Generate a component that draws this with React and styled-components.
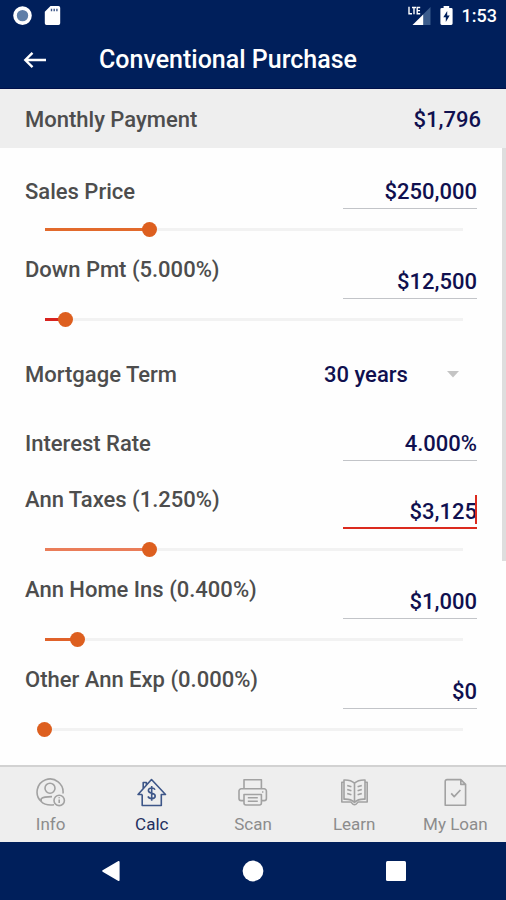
import React, { useState } from "react";
import styled, { createGlobalStyle, css } from "styled-components";

const navy = "#001f5b";
const ink = "#10104f";
const grey = "#4d4d4d";
const orange = "#dd5f1f";

const GlobalStyle = createGlobalStyle`
  *, *::before, *::after { box-sizing: border-box; }
  body { margin: 0; background: #fff; font-family: Roboto, sans-serif; }
  button, input, select { font: inherit; color: inherit; }
`;

const Screen = styled.div`
  display: flex;
  flex-direction: column;
  min-height: 100vh;
  background: #fefefe;
`;

const StatusBar = styled.div`
  display: flex;
  align-items: center;
  justify-content: space-between;
  height: 32px;
  padding: 0 9px 0 12px;
  background: ${navy};
  color: #fff;
`;

const StatusGroup = styled.div`
  display: flex;
  align-items: center;
  gap: ${(p) => p.$gap}px;
  font-size: 18px;
  font-weight: 500;
  line-height: 32px;
`;

const AppBar = styled.header`
  display: flex;
  align-items: center;
  gap: 46px;
  height: 57px;
  padding: 0 17px;
  background: ${navy};
  border-bottom: 1px solid #00104a;
  color: #fff;
`;

const IconButton = styled.button`
  display: flex;
  align-items: center;
  justify-content: center;
  width: 36px;
  height: 36px;
  padding: 0;
  border: 0;
  background: none;
  color: #fff;
  cursor: pointer;
`;

const Title = styled.h1`
  margin: 0;
  font-size: 25px;
  font-weight: 500;
  line-height: 32px;
`;

const Summary = styled.section`
  display: flex;
  align-items: center;
  justify-content: space-between;
  height: 59px;
  padding: 2px 25px 0;
  background: #eee;
  color: ${grey};
  font-size: 22px;
  font-weight: 500;
  line-height: 28px;
`;

const Amount = styled.output`
  color: ${ink};
`;

const Form = styled.form`
  position: relative;
  flex: 1;
  padding: 7px 29px 20px 25px;
`;

const ScrollThumb = styled.div`
  position: absolute;
  top: 0;
  right: 0;
  width: 4px;
  height: 67%;
  background: #dedede;
`;

const Field = styled.div`
  padding-top: ${(p) => (p.$compact ? 12 : 18)}px;
  padding-bottom: ${(p) => (p.$compact ? 14 : 2)}px;
`;

const FieldRow = styled.div`
  display: flex;
  align-items: ${(p) => (p.$raised ? "flex-start" : "center")};
  justify-content: space-between;
  gap: 16px;
`;

const Label = styled.label`
  margin-top: ${(p) => (p.$raised ? -9 : 0)}px;
  padding-top: 2px;
  color: ${grey};
  font-size: 22px;
  font-weight: 500;
  line-height: 28px;
  white-space: nowrap;
`;

const InputBox = styled.div`
  position: relative;
  flex: 0 0 134px;
`;

const TextInput = styled.input`
  display: block;
  width: 100%;
  height: 36px;
  padding: 2px 0 0;
  border: 0;
  border-bottom: 1px solid #c2c4c8;
  border-radius: 0;
  outline: 0;
  background: none;
  color: ${ink};
  font-size: 22px;
  font-weight: 500;
  text-align: right;
  ${(p) =>
    p.$active &&
    css`
      border-bottom: 2px solid #db2a1e;
      caret-color: transparent;
    `}
`;

const Caret = styled.span`
  position: absolute;
  right: 0;
  bottom: 5px;
  width: 2px;
  height: 29px;
  background: #db2a1e;
`;

const Slider = styled.input`
  display: block;
  appearance: none;
  width: calc(100% - 19px);
  height: 27px;
  margin: 7px 0 0 12px;
  cursor: pointer;
  background: linear-gradient(
      to right,
      ${(p) => p.$fill} var(--level),
      #f2f2f2 var(--level)
    )
    center / calc(100% - 15px) 3px no-repeat;

  &::-webkit-slider-thumb {
    appearance: none;
    width: 15px;
    height: 15px;
    border: 0;
    border-radius: 50%;
    background: ${orange};
  }
`;

const TermRow = styled.div`
  display: flex;
  align-items: center;
  justify-content: space-between;
  height: 78px;
`;

const SelectBox = styled.div`
  display: grid;
  grid-template-columns: 1fr 12px;
  align-items: center;
  width: 153px;
  padding-right: 18px;

  svg {
    grid-area: 1 / 2;
    pointer-events: none;
  }
`;

const Select = styled.select`
  grid-area: 1 / 1 / 2 / 3;
  appearance: none;
  height: 36px;
  padding: 0;
  border: 0;
  background: none;
  color: ${ink};
  font-size: 22px;
  font-weight: 500;
`;

const TabBar = styled.nav`
  display: grid;
  grid-template-columns: repeat(5, 1fr);
  height: 77px;
  border-top: 2px solid #d2d2d2;
  background: #eee;
`;

const Tab = styled.a`
  display: flex;
  flex-direction: column;
  align-items: center;
  gap: 6px;
  padding-top: 10px;
  color: ${(p) => (p.$active ? "#24305f" : "#8c8c8c")};
  font-size: 17px;
  line-height: 20px;
  text-decoration: none;

  svg {
    color: ${(p) => (p.$active ? "#3d5688" : "#a2a2a2")};
  }
`;

const SystemNav = styled.div`
  display: grid;
  grid-template-columns: repeat(3, 1fr);
  justify-items: center;
  align-items: center;
  height: 58px;
  padding: 0 39px 0 40px;
  background: ${navy};
`;

function TabIcon({ name }) {
  const shapes = {
    info: (
      <>
        <path d="M6.2 24.5A13 13 0 1 1 28 16.5M6.2 24.5V21.8C8 20 12 19.6 17 19.6M6.2 24.5C9 27.6 13.5 28.4 19 27.8" />
        <circle cx="15" cy="11.2" r="5" />
        <circle cx="24.2" cy="23.4" r="5.2" />
        <path d="M24.2 22.5v3.6M24.2 20.2v1" />
      </>
    ),
    calc: (
      <>
        <path d="M6.2 17.5H2L15.5 2.5 29.5 17.5H25.3V28.5H6.2V17.5M7.2 11.5V5.5H10.4V8" />
        <path d="M19 12.8C18.4 11.4 17.2 11 15.7 11 13.8 11 12.4 12 12.4 13.6 12.4 17.4 19.2 15.2 19.2 19 19.2 20.8 17.6 21.6 15.8 21.6 14 21.6 12.6 21 12 19.4M15.7 9v14.8" strokeWidth="1.6" />
      </>
    ),
    scan: (
      <>
        <path d="M7 11.8V2.8H24.4V11.8M7 23.6H4.2A2.2 2.2 0 0 1 2 21.4V14A2.2 2.2 0 0 1 4.2 11.8H27.2A2.2 2.2 0 0 1 29.4 14V21.4A2.2 2.2 0 0 1 27.2 23.6H24.4" />
        <path d="M7 17.5H24.4V26A2 2 0 0 1 22.4 28H9A2 2 0 0 1 7 26ZM10.8 20.7H20.8M10.8 24.2H20.8M25 15H26.4" />
      </>
    ),
    learn: (
      <>
        <path d="M15.5 6.2C12.5 3.4 8.8 2.8 5 3V22.2C9 22 12.8 22.8 15.5 25.4 18.2 22.8 22 22 26 22.2V3C22.2 2.8 18.5 3.4 15.5 6.2ZM15.5 6.2V25.4" />
        <path d="M5 5.2H2.8V25H11.5C13 25 13 27.8 15.5 27.8S18 25 19.5 25H28.2V5.2H26" />
        <path d="M8.2 8.4l4.2 1.4M8.2 12.4l4.2 1.4M8.2 16.4l4.2 1.4M22.8 8.4l-4.2 1.4M22.8 12.4l-4.2 1.4M22.8 16.4l-4.2 1.4" />
      </>
    ),
    loan: (
      <>
        <path d="M5.2 4.4A1.8 1.8 0 0 1 7 2.6H20.8L25.6 7.4V28.2H5.2ZM20.8 2.6V7.4H25.6" />
        <path d="M11.2 16.4L14.2 19.6 20.4 13" strokeWidth="1.7" />
      </>
    ),
  };
  return (
    <svg width="31" height="31" viewBox="0 0 31 31" fill="none" stroke="currentColor" strokeWidth="1.6" strokeLinejoin="round" aria-hidden="true">
      {shapes[name]}
    </svg>
  );
}

function AmountField({ id, label, initial, level, fill, raised, active }) {
  const [value, setValue] = useState(initial);
  const [position, setPosition] = useState(level);
  const hasSlider = level !== undefined;
  return (
    <Field $compact={!hasSlider}>
      <FieldRow $raised={raised}>
        <Label htmlFor={id} $raised={raised}>{label}</Label>
        <InputBox>
          <TextInput id={id} $active={active} value={value} onChange={(e) => setValue(e.target.value)} />
          {active && <Caret />}
        </InputBox>
      </FieldRow>
      {hasSlider && (
        <Slider
          type="range"
          min="0"
          max="100"
          aria-label={label}
          value={position}
          $fill={fill}
          style={{ "--level": `${position}%` }}
          onChange={(e) => setPosition(Number(e.target.value))}
        />
      )}
    </Field>
  );
}

const tabs = [
  { name: "info", label: "Info" },
  { name: "calc", label: "Calc" },
  { name: "scan", label: "Scan" },
  { name: "learn", label: "Learn" },
  { name: "loan", label: "My Loan" },
];

export default function App() {
  return (
    <Screen>
      <GlobalStyle />
      <StatusBar>
        <StatusGroup $gap={12}>
          <svg width="20" height="20" viewBox="0 0 20 20" aria-hidden="true">
            <circle cx="10.5" cy="9.6" r="7.5" fill="#5f7fa8" stroke="#fff" strokeWidth="3.6" />
          </svg>
          <svg width="17" height="20" viewBox="0 0 17 20" aria-hidden="true">
            <path d="M6.5 0H14.5A1.7 1.7 0 0 1 16.2 1.7V17.3A1.7 1.7 0 0 1 14.5 19H2.5A1.7 1.7 0 0 1 .8 17.3V5.7Z" fill="#fff" />
            <path d="M7.5 2.8v2.4M10.2 2.8v2.4M12.9 2.8v2.4" stroke="#3b5486" strokeWidth="1.4" />
          </svg>
        </StatusGroup>
        <StatusGroup $gap={9}>
          <svg width="23" height="20" viewBox="0 0 23 20" aria-hidden="true">
            <path d="M22.5 1V19H14V9.5Z" fill="#3b5c8c" />
            <path d="M15.2 8.5V19H4.5Z" fill="#fff" />
            <path d="M1 .8V7.7H4M4 1.5H8M6 1.5V8.2M12.2 1.5H9.2V7.7H12.2M9.2 4.6H12" fill="none" stroke="#fff" strokeWidth="1.4" />
          </svg>
          <svg width="13" height="20" viewBox="0 0 13 20" aria-hidden="true">
            <path d="M3.6 1.9V0H9.2V1.9H11.2A1.4 1.4 0 0 1 12.6 3.3V17.6A1.4 1.4 0 0 1 11.2 19H1.8A1.4 1.4 0 0 1 .4 17.6V3.3A1.4 1.4 0 0 1 1.8 1.9Z" fill="#fff" />
            <path d="M7.2 5L3.3 11.3H5.8V15.9L9.7 9.6H7.2Z" fill={navy} />
          </svg>
          <span>1:53</span>
        </StatusGroup>
      </StatusBar>
      <AppBar>
        <IconButton type="button" aria-label="Back">
          <svg width="24" height="18" viewBox="0 0 24 18" fill="none" stroke="#fff" strokeWidth="2.4" aria-hidden="true">
            <path d="M23 9H2.5M9.5 1.8L2.3 9L9.5 16.2" />
          </svg>
        </IconButton>
        <Title>Conventional Purchase</Title>
      </AppBar>
      <Summary>
        <span>Monthly Payment</span>
        <Amount>$1,796</Amount>
      </Summary>
      <Form onSubmit={(e) => e.preventDefault()}>
        <AmountField id="price" label="Sales Price" initial="$250,000" level={25} fill="#e26a2c" />
        <AmountField id="down" label="Down Pmt (5.000%)" initial="$12,500" level={5} fill="#d8231f" raised />
        <TermRow>
          <Label htmlFor="term">Mortgage Term</Label>
          <SelectBox>
            <Select id="term" defaultValue="30">
              <option value="30">30 years</option>
              <option value="15">15 years</option>
            </Select>
            <svg width="12" height="7" viewBox="0 0 12 7" aria-hidden="true">
              <path d="M0 0H12L6 6.5Z" fill="#c4c4c4" />
            </svg>
          </SelectBox>
        </TermRow>
        <AmountField id="rate" label="Interest Rate" initial="4.000%" />
        <AmountField id="taxes" label="Ann Taxes (1.250%)" initial="$3,125" level={25} fill="#ea7d59" raised active />
        <AmountField id="insurance" label="Ann Home Ins (0.400%)" initial="$1,000" level={8} fill="#e0622a" raised />
        <AmountField id="other" label="Other Ann Exp (0.000%)" initial="$0" level={0} fill={orange} raised />
        <ScrollThumb />
      </Form>
      <TabBar>
        {tabs.map((tab) => (
          <Tab key={tab.name} href={`#${tab.name}`} $active={tab.name === "calc"}>
            <TabIcon name={tab.name} />
            {tab.label}
          </Tab>
        ))}
      </TabBar>
      <SystemNav>
        <IconButton type="button" aria-label="System back">
          <svg width="20" height="22" viewBox="0 0 20 22" aria-hidden="true">
            <path d="M17.8 1.8V20.2L2 11Z" fill="#fff" stroke="#fff" strokeWidth="1.6" strokeLinejoin="round" />
          </svg>
        </IconButton>
        <IconButton type="button" aria-label="Home">
          <svg width="22" height="22" viewBox="0 0 22 22" aria-hidden="true">
            <circle cx="11" cy="11" r="10.4" fill="#fff" />
          </svg>
        </IconButton>
        <IconButton type="button" aria-label="Recent apps">
          <svg width="20" height="20" viewBox="0 0 20 20" aria-hidden="true">
            <rect width="20" height="20" rx="1.5" fill="#fff" />
          </svg>
        </IconButton>
      </SystemNav>
    </Screen>
  );
}
